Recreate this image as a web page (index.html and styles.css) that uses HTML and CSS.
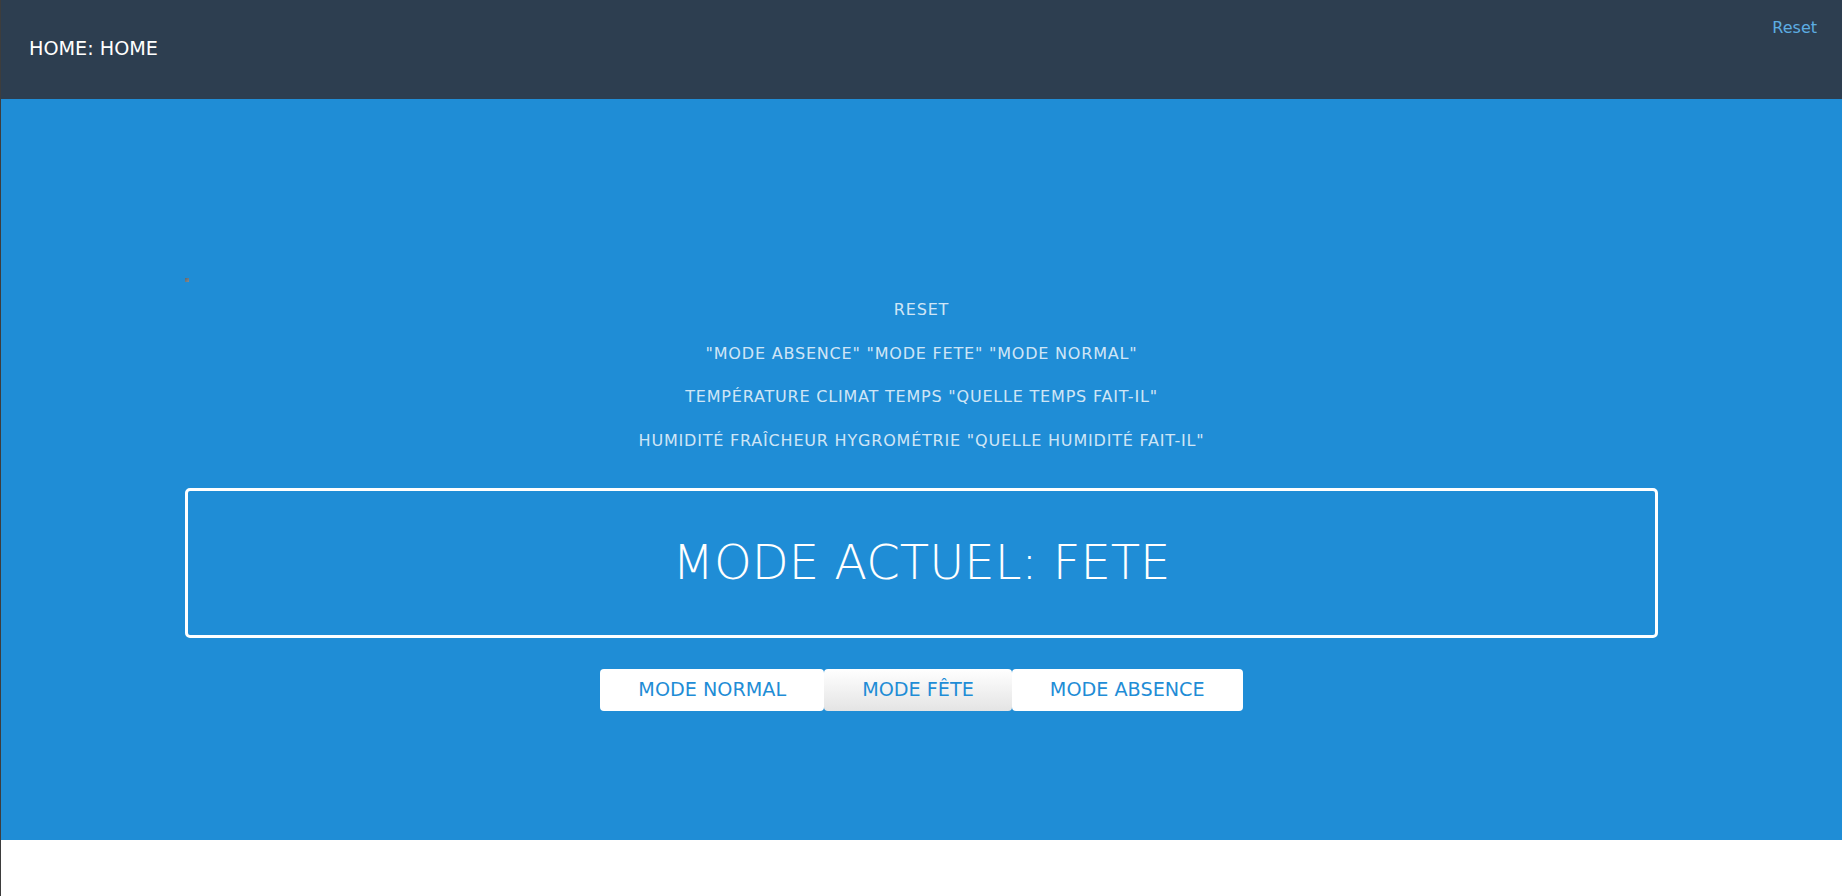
FILE: index.html
```html
<!DOCTYPE html>
<html lang="fr">
<head>
<meta charset="utf-8">
<title>Home</title>
<link rel="stylesheet" href="styles.css">
</head>
<body>
<header class="topbar">
  <h1 class="topbar-title">HOME: HOME</h1>
  <a class="topbar-link" href="#">Reset</a>
</header>
<main class="hero">
  <div class="container">
    <span class="marker"></span>
    <div class="hints">
      <p class="hint">RESET</p>
      <p class="hint">"MODE ABSENCE" "MODE FETE" "MODE NORMAL"</p>
      <p class="hint">TEMPÉRATURE CLIMAT TEMPS "QUELLE TEMPS FAIT-IL"</p>
      <p class="hint">HUMIDITÉ FRAÎCHEUR HYGROMÉTRIE "QUELLE HUMIDITÉ FAIT-IL"</p>
    </div>
    <div class="status">
      <h2 class="status-text">MODE ACTUEL: FETE</h2>
    </div>
    <div class="modes">
      <button class="mode-btn">MODE NORMAL</button>
      <button class="mode-btn mode-btn-active">MODE FÊTE</button>
      <button class="mode-btn">MODE ABSENCE</button>
    </div>
  </div>
</main>
</body>
</html>
```

FILE: styles.css
```css
html, body {
  margin: 0;
  padding: 0;
  height: 100%;
}

body {
  font-family: "DejaVu Sans", Verdana, sans-serif;
  background: #ffffff;
  border-left: 1px solid #3d3d3d;
  box-sizing: border-box;
  min-height: 896px;
}

.topbar {
  height: 99px;
  background: #2d3e50;
  display: flex;
  justify-content: space-between;
  align-items: flex-start;
  padding: 0 25px 0 28px;
  box-sizing: border-box;
}

.topbar-title {
  margin: 37px 0 0;
  font-size: 19.2px;
  line-height: 23px;
  font-weight: normal;
  color: #ffffff;
}

.topbar-link {
  margin-top: 18px;
  font-size: 16px;
  line-height: 19px;
  color: #5dade2;
  text-decoration: none;
}

.hero {
  background: #1f8dd6;
  height: 741px;
  padding-top: 179px;
  box-sizing: border-box;
}

.container {
  width: 80%;
  margin: 0 auto;
  display: flex;
  flex-direction: column;
  align-items: stretch;
}

.marker {
  display: block;
  width: 4px;
  height: 4px;
  background: linear-gradient(135deg, #5b6670 0%, #8c8c8c 100%);
  margin-bottom: 17px;
}

.hints {
  display: flex;
  flex-direction: column;
  gap: 21.5px;
  text-align: center;
}

.hint {
  margin: 0;
  font-size: 16px;
  line-height: 22px;
  letter-spacing: 0.8px;
  color: rgba(255, 255, 255, 0.8);
}

.status {
  margin-top: 36px;
  border: 3px solid #ffffff;
  border-radius: 5px;
  padding: 43px 0 45px;
  text-align: center;
}

.status-text {
  margin: 0;
  font-size: 48px;
  line-height: 56px;
  font-weight: 200;
  color: #ffffff;
}

.modes {
  margin-top: 31px;
  display: flex;
  justify-content: center;
}

.mode-btn {
  font-family: "DejaVu Sans", Verdana, sans-serif;
  font-size: 19.2px;
  line-height: 24px;
  padding: 9px 38px;
  border: none;
  border-radius: 4px;
  background: #ffffff;
  color: #1f8dd6;
  cursor: pointer;
}

.mode-btn-active {
  background: linear-gradient(to bottom, #ffffff 0%, #e4e4e4 100%);
}
```
